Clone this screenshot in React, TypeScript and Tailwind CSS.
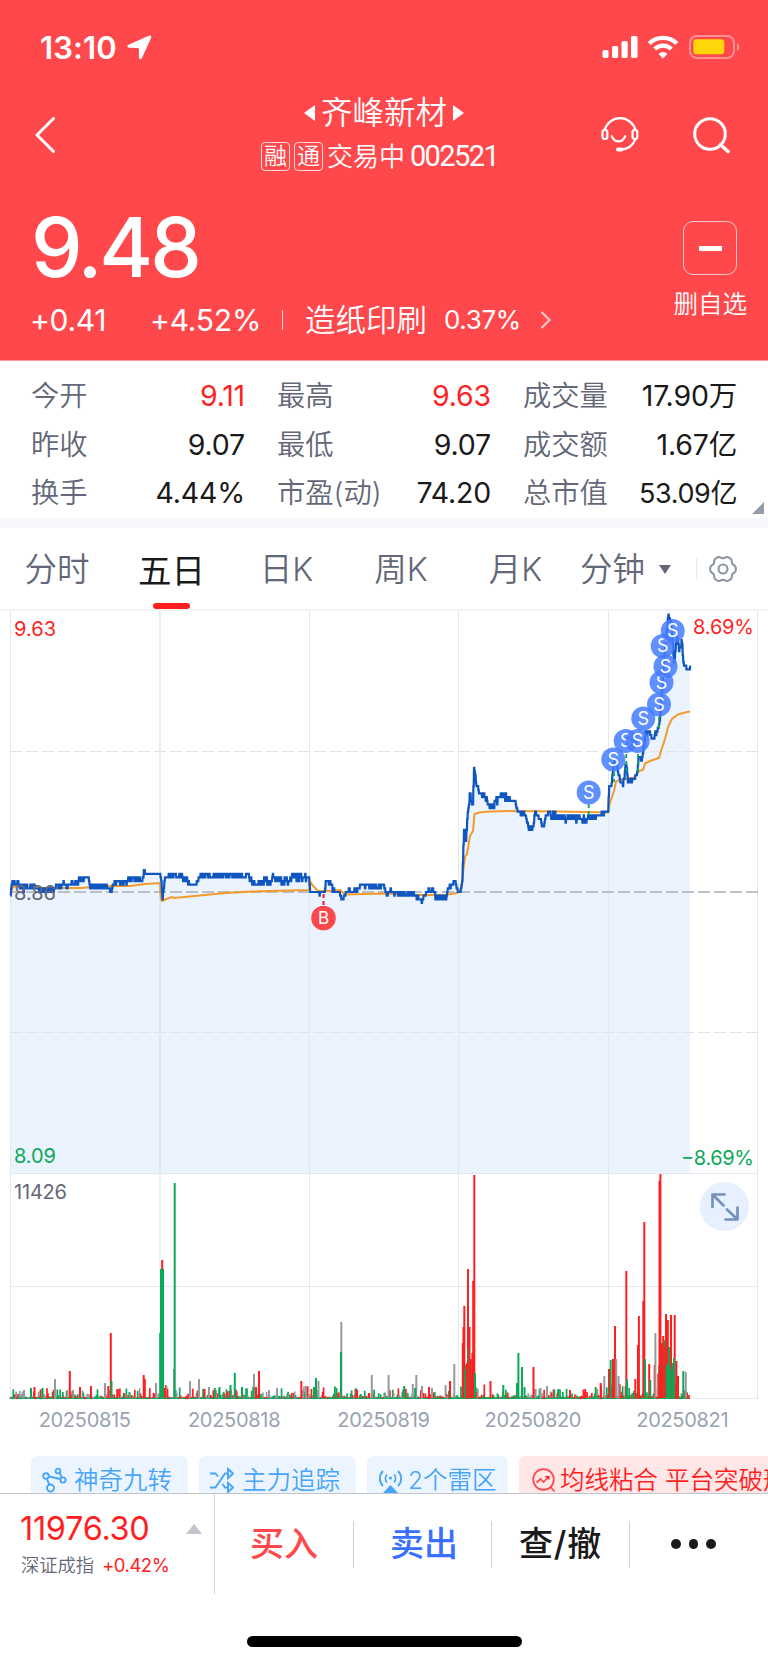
import type { ReactNode } from "react";
import clsx from "clsx";

const STATS = [
  { label: "今开", value: "9.11", up: true },
  { label: "最高", value: "9.63", up: true },
  { label: "成交量", value: "17.90万" },
  { label: "昨收", value: "9.07" },
  { label: "最低", value: "9.07" },
  { label: "成交额", value: "1.67亿" },
  { label: "换手", value: "4.44%" },
  { label: "市盈(动)", value: "74.20" },
  { label: "总市值", value: "53.09亿", small: true },
];

const DATES = ["20250815", "20250818", "20250819", "20250820", "20250821"];

// chart geometry, svg units are css pixels
const COLS = [10.5, 160, 309.5, 458.5, 608.5, 757.5];
const TICK = 3.65;
const MINUTE = 0.623;
const BASE = 281;
const BOTTOM = 562.5;
const VOL_BOTTOM = 788;

// [x, y, jitter]
const PRICE: [number, number, number][] = [
  [10.5, 284, 0], [12, 272, 3], [18, 273, 4], [20, 276, 4], [35, 277, 4], [40, 280, 4], [43, 279, 4],
  [53, 280, 3], [56, 274, 3], [70, 274, 4], [78, 272, 3], [80, 267, 3], [88, 267, 4], [90, 276, 4],
  [109, 276, 4], [111, 282, 1], [113, 272, 4], [126, 272, 4], [130, 268, 4], [138, 268, 4],
  [142, 272, 2], [144, 259, 1], [146, 262, 0], [159, 262, 0], [161, 266, 2], [162.5, 288, 2],
  [165, 265, 3], [180, 266, 5], [187, 269, 3], [190, 273, 0], [196, 272, 2], [200, 265, 3],
  [215, 264, 4], [248, 264, 4], [252, 270, 5], [256, 274, 3], [262, 270, 4], [270, 271, 4],
  [273, 267, 3], [280, 269, 4], [290, 270, 4], [292, 266, 4], [309, 266, 1], [310, 281, 3],
  [324, 282, 3], [326, 270, 3], [331, 271, 3], [333, 280, 2], [340, 281, 3], [342, 289, 2],
  [346, 282, 3], [350, 279, 2], [357, 280, 3], [362, 274, 3], [366, 276, 4], [384, 275, 4],
  [386, 283, 3], [391, 279, 3], [395, 282, 4], [405, 283, 4], [415, 284, 4], [422, 290, 2],
  [428, 279, 3], [433, 279, 3], [436, 286, 2], [446, 286, 3], [448, 276, 3], [455, 271, 4],
  [459, 283, 2], [462, 273, 0], [464, 219, 3], [466, 229, 3], [467.5, 200, 5], [470, 183, 4],
  [472.5, 198, 3], [474, 157, 2], [476, 172, 4], [479, 182, 4], [483, 184, 4], [486, 189, 4],
  [490, 196, 3], [494, 194, 4], [498, 188, 3], [502, 185, 5], [506, 187, 3], [510, 189, 3],
  [515, 190, 2], [518, 201, 4], [523, 202, 4], [526, 208, 3], [529, 216, 3], [533, 217, 2],
  [535, 202, 3], [539, 206, 3], [543, 216, 3], [546, 207, 3], [548, 201, 3], [552, 205, 5],
  [560, 206, 4], [570, 208, 4], [580, 208, 4], [586, 208, 4], [590, 205, 3], [600, 206, 4],
  [604, 201, 2], [608, 201, 2], [609, 176, 3], [611.5, 174, 3], [614, 148, 3], [617, 156, 3],
  [620, 168, 4], [623, 173, 3], [626, 152, 3], [628, 170, 4], [631, 170, 4], [637, 165, 4],
  [638.5, 146, 3], [642, 148, 4], [645, 124, 4], [648, 120, 4], [651, 123, 4], [654, 128, 4],
  [658, 117, 3], [660, 108, 4], [662, 80, 4], [664, 50, 4], [666, 28, 4], [668.5, 4, 1],
  [671, 12, 4], [674, 50, 4], [677, 22, 4], [679, 38, 4], [682, 32, 4], [684, 54, 3],
  [687, 60, 3], [690.2, 55, 2],
];

const AVERAGE: [number, number][] = [
  [10.5, 283], [13, 276], [22, 275], [34, 274], [42, 277], [80, 277], [110, 275], [130, 275],
  [145, 273], [160, 272], [160.8, 288], [162, 290], [165, 288.5], [172, 286], [174, 287], [200, 284.5],
  [225, 282], [252, 280.5], [270, 280], [309, 279], [310, 270], [313, 275], [318, 280], [330, 280],
  [340, 279], [345, 283.5], [384, 282.5], [420, 284], [445, 284], [457, 282], [461, 278], [465, 246],
  [467, 243], [470, 225], [473, 220], [474.5, 203], [479, 201.5], [490, 200.5], [510, 200], [560, 200.5],
  [608, 201.5], [609.5, 193], [614, 180], [616, 170.5], [620, 169], [634, 166.5], [639, 160], [643, 159],
  [645, 152.5], [650, 150], [659, 147], [661, 140], [665, 128], [668, 116], [672, 108], [678, 103.5],
  [683, 102], [690, 100.5],
];

const SELLS = [
  [588.7, 181.5], [613.3, 148.5], [625.7, 130], [637.6, 130], [643.3, 107.5],
  [659, 93.5], [661.5, 71.5], [665.5, 55.5], [662.7, 35], [672.7, 20],
];

const RED = "#ff1f1f";
const GREEN = "#0aa858";
const GRAY = "#97999f";

// [x, height, colour]
const SPIKES: [number, number, string][] = [
  [55, 20, GRAY], [69.8, 28, RED], [80, 12, RED], [91, 13, RED], [31, 11, GREEN], [42.5, 11, GREEN], [34.5, 12, RED],
  [24, 9, GRAY], [105, 16, GRAY], [108.3, 13, RED], [110.8, 66, RED], [111.5, 18, GREEN], [143.7, 24, RED], [144.8, 20, RED],
  [156, 16, GRAY], [162.2, 139, RED], [161, 130, GREEN], [163, 130, GREEN], [160.2, 66, GREEN], [165, 11, RED],
  [174, 30, GRAY], [174.7, 216, GREEN], [190, 18, GRAY], [199, 20, GRAY], [204.5, 10, RED], [209, 12, GRAY],
  [214.8, 11, GREEN], [219.5, 12, GREEN], [230.5, 14, GREEN], [234.8, 26, GREEN], [242, 12, GREEN],
  [254, 25, GRAY], [253.3, 12, GREEN], [256, 12, RED], [259, 28, RED], [269, 9, GRAY], [277, 11, GRAY], [301.3, 18, RED],
  [306, 13, GRAY], [316, 21, GREEN], [318.5, 18, GRAY], [314, 12, GREEN], [336.4, 11, GREEN], [341.3, 77, GRAY], [341, 47, GREEN],
  [357, 9, RED], [369, 6, RED], [371.8, 24, GRAY], [388.6, 24, GRAY], [404.2, 13, GREEN], [412.8, 15, GRAY],
  [416.3, 24, GRAY], [415.2, 11, GREEN], [422, 13, GRAY], [429, 12, RED], [432, 11, GRAY], [445.6, 14, GRAY], [450, 18, RED],
  [454.3, 35, GRAY], [462.8, 56, RED], [464.3, 93, RED], [463.5, 72, RED], [466, 34, GREEN], [468, 130, RED],
  [468.6, 51, GREEN], [469.5, 72, RED], [470.8, 40, RED], [473.2, 118, RED], [474.3, 224, RED], [475, 26, GREEN],
  [472.4, 46, RED], [490.5, 18, RED], [503.3, 14, GREEN], [518.4, 46, GREEN], [517, 16, GREEN], [522, 32, GREEN],
  [524.5, 12, GREEN], [533.5, 32, RED], [540.5, 11, GRAY], [547, 13, GRAY], [558.4, 10, GREEN], [570, 9, RED], [585.3, 10, RED],
  [595.7, 12, GREEN], [600.7, 16, RED], [604.3, 23, GRAY], [609, 30, RED], [610.7, 39, GREEN], [613, 40, RED],
  [615, 73, RED], [616.2, 40, GRAY], [618.5, 23, GRAY], [626.3, 128, RED], [627, 20, GREEN], [635.3, 20, RED],
  [638, 54, RED], [638.9, 83, RED], [643.3, 98, RED], [644.3, 177, RED], [645, 40, GREEN], [649.2, 35, RED],
  [650.3, 19, GREEN], [654.7, 34, RED], [655.4, 66, GRAY], [659.5, 218, RED], [660.4, 225, RED], [661.7, 56, RED],
  [663.2, 63, RED], [664.6, 59, GREEN], [666, 85, RED], [667.8, 79, RED], [669, 52, GREEN], [671, 84, RED],
  [674.7, 84, RED], [674, 41, GREEN], [676.4, 38, RED], [678, 23, RED], [683.3, 28, GREEN], [685.8, 27, GRAY],
  [465.2, 30, GREEN], [467, 36, RED], [662.3, 50, RED], [665.3, 52, RED], [667, 34, GREEN], [670.2, 30, GREEN], [672.5, 36, GREEN],
];

function seeded(seed: number) {
  let s = seed;
  return () => {
    s = (s * 16807) % 2147483647;
    return s / 2147483647;
  };
}

function buildPrice() {
  const rand = seeded(4211);
  let d = "";
  let i = 0;
  let prev = NaN;
  for (let x = PRICE[0][0]; x <= 690.2; x += MINUTE) {
    while (i < PRICE.length - 2 && PRICE[i + 1][0] <= x) i++;
    const [x0, y0, j0] = PRICE[i];
    const [x1, y1] = PRICE[i + 1];
    const t = Math.min(1, (x - x0) / (x1 - x0));
    const raw = y0 + (y1 - y0) * t + (rand() - 0.5) * j0 * 1.5;
    const y = BASE + Math.round((raw - BASE) / TICK) * TICK;
    if (prev === y || Number.isNaN(prev)) d += `L${x.toFixed(1)} ${y.toFixed(1)}`;
    else d += `L${(x - 0.3).toFixed(1)} ${prev.toFixed(1)}L${x.toFixed(1)} ${y.toFixed(1)}`;
    prev = y;
  }
  return d.slice(1);
}

// quiet minutes get a low random bar, busier around the two rallies
function ambient(x: number) {
  if (x > 456 && x < 474) return 8 + (x - 456) * 1.2;
  if (x >= 474 && x < 492) return 22 - (x - 474) * 0.9;
  if (x > 596 && x < 609) return 12;
  if (x >= 609 && x < 624) return 26 - (x - 609) * 1.1;
  if (x >= 624 && x < 658) return 14;
  if (x >= 658 && x < 680) return 42 - (x - 658) * 1.4;
  if (x >= 680) return 10;
  if (x > 160 && x < 180) return 13;
  if (x > 300 && x < 345) return 12;
  return 9;
}

function buildVolume() {
  const rand = seeded(977);
  const bars: [number, number, string][] = [];
  for (let x = 10.5; x <= 689.5; x += MINUTE * 1.5) {
    const top = ambient(x);
    const r = rand();
    const h = 1.8 + top * (top > 20 ? 0.35 + r * 0.5 : r * r * r);
    const c = rand();
    const busy = (x > 456 && x < 500) || x > 606;
    bars.push([x, h, c < (busy ? 0.55 : 0.42) ? GREEN : c < (busy ? 0.97 : 0.75) ? RED : GRAY]);
  }
  return bars;
}

// six soft lobes, pointing left and right
function buildGear() {
  const points: string[] = [];
  for (let a = 0; a < 360; a += 6) {
    const t = (a * Math.PI) / 180;
    const r = 12 + 1.1 * Math.cos(6 * t) - 0.25 * Math.cos(12 * t);
    points.push(`${(14 + r * Math.cos(t)).toFixed(2)} ${(14 + r * Math.sin(t)).toFixed(2)}`);
  }
  return `M${points.join("L")}Z`;
}

const pricePath = buildPrice();
const volume = buildVolume();
const gearPath = buildGear();
const averagePath = AVERAGE.map(([x, y]) => `${x} ${y}`).join("L");

function StatusBar() {
  return (
    <div className="flex h-[94px] items-center justify-between pl-[40px] pr-[27px]">
      <div className="flex items-center gap-[10px]">
        <span className="text-[31px] font-semibold leading-none tracking-[0.1px]">13:10</span>
        <svg className="h-[25px] w-[25px]" viewBox="0 0 25 25" fill="#fff">
          <path d="M22.3.6 1.5 9.7C-.3 10.6.2 12.6 2 12.7l9 .2c.6 0 .8.2.8.8l.2 8.8c.1 1.9 2.2 2.3 3 .5L24.2 2.6C24.7 1.2 23.6.1 22.3.6Z" />
        </svg>
      </div>
      <div className="flex items-center">
        <svg className="h-[22px] w-[36px]" viewBox="0 0 36 22" fill="#fff">
          <rect x="0.5" y="14" width="6" height="8" rx="1.7" />
          <rect x="10" y="10" width="6.2" height="12" rx="1.7" />
          <rect x="19.5" y="5" width="6.2" height="17" rx="1.7" />
          <rect x="29" y="0" width="6.5" height="22" rx="1.7" />
        </svg>
        <svg className="ml-[9px] h-[24px] w-[32px]" viewBox="0 0 32 24" fill="none" stroke="#fff" strokeWidth="4.2">
          <path d="M2.2 8.6a19.5 19.5 0 0 1 27.6 0" />
          <path d="M7.7 14.1a11.7 11.7 0 0 1 16.6 0" />
          <path d="M16 23.4l-4.4-4.5a6.2 6.2 0 0 1 8.8 0z" fill="#fff" stroke="none" />
        </svg>
        <svg className="ml-[10px] h-[24px] w-[52px]" viewBox="0 0 52 24">
          <rect x="1" y="1" width="44" height="22" rx="7" fill="none" stroke="#fff" strokeOpacity="0.4" strokeWidth="2" />
          <rect x="4.3" y="4.3" width="31" height="15" rx="3" fill="#ffd60a" />
          <path d="M48 8v8c3-1.2 3-6.8 0-8Z" fill="#fff" fillOpacity="0.45" />
        </svg>
      </div>
    </div>
  );
}

function BoxedChar({ children }: { children: ReactNode }) {
  return (
    <span className="flex h-[29px] w-[29px] items-center justify-center rounded-[4px] border border-white/80 text-[23px] leading-none">
      {children}
    </span>
  );
}

function Header() {
  return (
    <header className="h-[360px] bg-[#ff484b] text-white">
      <StatusBar />
      <div className="flex h-[82px] items-center justify-between pl-[35px] pr-[38px]">
        <svg className="h-[36px] w-[210px]" viewBox="0 0 210 36" fill="none" stroke="#fff" strokeWidth="3" strokeLinecap="round" strokeLinejoin="round">
          <path d="M18.5 1.5 2 18l16.5 16.5" />
        </svg>
        <div className="flex flex-col items-center">
          <div className="-mt-[2px] flex items-center gap-[6px] pl-[3px]">
            <svg className="h-[16px] w-[11px]" viewBox="0 0 11 16" fill="#fff"><path d="M11 0v16L0 8z" /></svg>
            <span className="text-[31.5px] leading-[42px]">齐峰新材</span>
            <svg className="h-[16px] w-[11px]" viewBox="0 0 11 16" fill="#fff"><path d="M0 0v16l11-8z" /></svg>
          </div>
          <div className="mt-[3px] flex h-[40px] items-center gap-[4px] pr-[6px] text-[26px] leading-none">
            <BoxedChar>融</BoxedChar>
            <BoxedChar>通</BoxedChar>
            <span className="flex items-center gap-[5px]">
              <span>交易中</span>
              <span className="font-['Roboto'] text-[29px] font-normal tracking-[-1.6px]">002521</span>
            </span>
          </div>
        </div>
        <div className="flex w-[210px] items-center justify-end gap-[54px]">
          <svg className="h-[36px] w-[38px]" viewBox="0 0 38 36" fill="none" stroke="#fff" strokeWidth="2.2" strokeLinecap="round">
            <path d="M3.8 12.5a15.9 15.9 0 0 1 30.5 0" />
            <rect x="1.5" y="13" width="4.8" height="9" rx="2.2" />
            <rect x="31.5" y="13" width="4.8" height="9" rx="2.2" />
            <path d="M34.2 22.5C32 28.5 27 32 20 32.5" />
            <path d="M17 32.5h3.5" strokeWidth="4" />
            <path d="M10.8 19.2c3 7 10.2 7 13.4 0" />
          </svg>
          <svg className="h-[37px] w-[37px]" viewBox="0 0 37 37" fill="none" stroke="#fff" strokeWidth="3">
            <circle cx="17" cy="17" r="15.3" />
            <path d="m27.5 27.5 7.5 7" strokeWidth="3.4" strokeLinecap="round" />
          </svg>
        </div>
      </div>
      <div className="flex justify-between pl-[31px] pr-[21px]">
        <div>
          <div className="h-[112px] pt-[32px] text-[82px] font-medium leading-[80px] tracking-[-3px]">9.48</div>
          <div className="flex h-[64px] items-center text-[30px] leading-none">
            <span className="-ml-[1px] w-[120px] font-normal tracking-[-0.3px]">+0.41</span>
            <span className="w-[132px] font-normal tracking-[-0.2px]">+4.52%</span>
            <span className="h-[20px] w-px bg-white/80" />
            <span className="ml-[22px] text-[30.5px]">造纸印刷</span>
            <span className="ml-[17px] text-[26px] font-normal tracking-[-0.4px]">0.37%</span>
            <svg className="ml-[19px] h-[18px] w-[12px]" viewBox="0 0 12 18" fill="none" stroke="#fff" strokeOpacity="0.7" strokeWidth="2.2">
              <path d="m1.5 1 8 8-8 8" />
            </svg>
          </div>
        </div>
        <div className="flex flex-col items-center pt-[45px]">
          <div className="flex h-[54px] w-[54px] items-center justify-center rounded-[10px] border-[1.5px] border-white/70">
            <span className="h-[5px] w-[23px] bg-white" />
          </div>
          <span className="mt-[12px] text-[24.5px] leading-[34px]">删自选</span>
        </div>
      </div>
    </header>
  );
}

function Stats() {
  return (
    <section className="relative h-[158px] border-t border-[#ff9a9b] bg-white px-[31px] pt-[11px]">
      <div className="grid grid-cols-3 gap-x-[32px]">
        {STATS.map((item) => (
          <div key={item.label} className="flex h-[48.5px] items-center justify-between leading-none">
            <span className="text-[28.3px] text-[#636777]">{item.label}</span>
            <span
              className={clsx(
                "font-normal tracking-[-0.2px]",
                item.small ? "text-[27px] tracking-[-0.4px]" : "text-[28.5px]",
                item.up ? "text-[#ff1f1f]" : "text-[#1a1a1a]"
              )}
            >
              {item.value}
            </span>
          </div>
        ))}
      </div>
      <svg className="absolute bottom-[4px] right-[4px] h-[12px] w-[12px]" viewBox="0 0 12 12" fill="#969daa">
        <path d="M12 0v12H0z" />
      </svg>
    </section>
  );
}

function Tabs() {
  return (
    <nav className="flex h-[83px] border-b-2 border-[#f1f3f7] text-[32.5px] leading-none text-[#636777]">
      <div className="flex w-[114px] items-center justify-center pt-[4px]">分时</div>
      <div className="flex w-[115px] flex-col items-center justify-between pt-[27px] text-[#1a1a1a]">
        <span className="text-[33.5px] font-normal">五日</span>
        <span className="h-[6px] w-[37px] shrink-0 rounded-full bg-[#ff1f1f]" />
      </div>
      <div className="flex w-[115px] items-center justify-center pt-[4px]">日K</div>
      <div className="flex w-[114px] items-center justify-center pt-[4px]">周K</div>
      <div className="flex w-[115px] items-center justify-center pt-[4px]">月K</div>
      <div className="flex w-[123px] items-center pl-[7px] pt-[4px]">
        分钟
        <svg className="-mt-[2px] ml-[14px] h-[9px] w-[12px]" viewBox="0 0 12 9" fill="#636777"><path d="M0 0h12L6 9z" /></svg>
      </div>
      <div className="flex items-center gap-[12px]">
        <span className="h-[21px] w-px bg-[#e6e9f0]" />
        <svg className="h-[28px] w-[28px]" viewBox="0 0 28 28" fill="none" stroke="#8d96a3" strokeWidth="2.1" strokeLinejoin="round">
          <path d={gearPath} />
          <circle cx="14" cy="14" r="4.5" />
        </svg>
      </div>
    </nav>
  );
}

function Chart() {
  return (
    <section className="relative">
      <svg className="block h-[790px] w-[768px] font-['Inter',sans-serif] font-normal" viewBox="0 0 768 790" fontSize="20">
        <path d={`M${pricePath}V${BOTTOM}H10.5Z`} fill="#ebf3fe" />
        <g stroke="#1f5fc8" strokeOpacity="0.15">
          {COLS.slice(1, 5).map((x) => <path key={x} d={`M${x} 0V${BOTTOM}`} />)}
        </g>
        <g stroke="#e3e7ee">
          {COLS.map((x) => <path key={x} d={`M${x} 0V${VOL_BOTTOM}`} />)}
          <path d="M10 562.5H758M10 675.5H758M10 787.5H758" />
        </g>
        <path d="M10 140.5H758M10 421.5H758" stroke="#e0e4ea" strokeDasharray="12 4" />
        <path d="M10 281H758" stroke="#a9aeb8" strokeWidth="1.7" strokeDasharray="12 4" />

        <path d={`M${averagePath}`} fill="none" stroke="#f39a2b" strokeWidth="2" />
        <path d={`M${pricePath}`} fill="none" stroke="#0f56c1" strokeWidth="2.2" />

        <text x="14" y="25" fill="#ff1f1f" textLength="42">9.63</text>
        <text x="14" y="289" fill="#636777" textLength="42">8.86</text>
        <text x="14" y="552" fill={GREEN} textLength="42">8.09</text>
        <text x="693" y="23" fill="#ff1f1f" textLength="61">8.69%</text>
        <text x="681" y="554" fill={GREEN} textLength="73">−8.69%</text>
        <text x="14" y="588" fill="#636777" textLength="53">11426</text>

        <g fill="none" stroke={GREEN} strokeWidth="1.8" strokeDasharray="4 3">
          <path d="M588.7 193V204M614 161V171M626.3 143V164M638 143V163M659 106V117" />
        </g>
        <path d="M323.5 283V296" stroke="#f01a2c" strokeWidth="2" strokeDasharray="4 3" />
        {SELLS.map(([x, y]) => (
          <g key={`${x}-${y}`}>
            <circle cx={x} cy={y} r="12" fill="#447bff" fillOpacity="0.85" />
            <text x={x} y={y + 6} fill="#fff" fontSize="18" textAnchor="middle">S</text>
          </g>
        ))}
        <circle cx="323.5" cy="307" r="12.3" fill="#fa484b" />
        <text x="323.5" y="313" fill="#fff" fontSize="17" textAnchor="middle">B</text>

        {volume.map(([x, h, c]) => (
          <rect key={x} x={x - 0.8} y={VOL_BOTTOM - h} width="1.7" height={h} fill={c} />
        ))}
        {SPIKES.map(([x, h, c], i) => (
          <rect key={i} x={x - 1} y={VOL_BOTTOM - h} width="2" height={h} fill={c} />
        ))}
        <path d="M10 787.5H306M309 787.5H690" stroke={GREEN} strokeWidth="1.2" strokeDasharray="5 3 9 2" />
      </svg>
      <button className="absolute left-[700px] top-[571px] flex h-[49px] w-[49px] items-center justify-center rounded-full bg-[#e6f0fe]">
        <svg className="h-[28px] w-[28px]" viewBox="0 0 28 28" fill="none" stroke="#7591bd" strokeWidth="2.7" strokeLinecap="round" strokeLinejoin="round">
          <path d="M13.5 1.5H1.5V14M2 2l10.5 10.5M14.5 26.5h12V14.5M26 26 16 16.5" />
        </svg>
      </button>
      <div className="ml-[10px] grid w-[747px] grid-cols-5 pb-px pt-[7px] text-center text-[20px] font-normal leading-[24px] tracking-[-0.3px] text-[#9aa2b1]">
        {DATES.map((date) => (
          <span key={date}>{date}</span>
        ))}
      </div>
    </section>
  );
}

function Tag({ icon, hot, className, children }: { icon: ReactNode; hot?: boolean; className?: string; children: ReactNode }) {
  return (
    <div
      className={clsx(
        "flex h-[48px] shrink-0 items-center whitespace-nowrap rounded-[7px] text-[24.5px] leading-none",
        hot ? "bg-[#ffe7e7] text-[#ff1f1f]" : "bg-[#ecf5ff] text-[#48a5f9]",
        className
      )}
    >
      {icon}
      {children}
    </div>
  );
}

function Tags() {
  return (
    <div className="flex h-[37px] gap-[11px] overflow-hidden pl-[31px]">
      <Tag
        className="w-[157px] gap-[7px] pl-[11px]"
        icon={
          <svg className="h-[26px] w-[25px] shrink-0" viewBox="0 0 25 26" fill="none" stroke="currentColor" strokeWidth="1.9">
            <circle cx="4" cy="9" r="2.8" />
            <circle cx="16" cy="4" r="2.4" />
            <circle cx="21" cy="13" r="2.6" />
            <circle cx="8.5" cy="21" r="3.5" />
            <path d="M7 9.5 18.5 12M5 12l2.2 5.5M17.5 6l2.5 4.5" />
          </svg>
        }
      >
        神奇九转
      </Tag>
      <Tag
        className="w-[157px] gap-[8px] pl-[11px]"
        icon={
          <svg className="h-[26px] w-[24px] shrink-0" viewBox="0 0 24 26" fill="none" stroke="currentColor" strokeWidth="1.9">
            <path d="M0 6.5h5.5l2.5 3M0 20.5h5.5L15 6.5h3M12.5 17l2.5 3.5h3" />
            <path d="M18 2v9l5-4.5zM18 16v9l5-4.5z" />
          </svg>
        }
      >
        主力追踪
      </Tag>
      <Tag
        className="w-[141px] gap-[5px] pl-[11px]"
        icon={
          <svg className="h-[26px] w-[25px] shrink-0" viewBox="0 0 25 26" fill="none" stroke="currentColor" strokeWidth="1.8">
            <path d="M5 4a10.5 10.5 0 0 0 0 15M20 4a10.5 10.5 0 0 1 0 15M9 7.5a6 6 0 0 0 0 8M16 7.5a6 6 0 0 1 0 8" />
            <circle cx="12.5" cy="11" r="1.6" fill="currentColor" stroke="none" />
            <path d="M12.5 18 20 26H5z" fill="currentColor" stroke="none" />
          </svg>
        }
      >
        <span>2个雷区</span>
      </Tag>
      <Tag
        hot
        className="w-[300px] gap-[4px] pl-[13px]"
        icon={
          <svg className="h-[24px] w-[24px] shrink-0" viewBox="0 0 24 24" fill="none" stroke="currentColor" strokeOpacity="0.8" strokeWidth="1.7">
            <circle cx="11.5" cy="11.5" r="10.3" />
            <path d="m18.5 19 4 4.5M4.500 14.500l4-3.500 3 3 5-5" />
            <path d="M12.500 8h5v4z" fill="currentColor" stroke="none" />
          </svg>
        }
      >
        均线粘合 平台突破形
      </Tag>
    </div>
  );
}

function BottomBar() {
  return (
    <footer className="h-[171px] border-t border-[#c1c4cd] bg-white">
      <div className="flex h-[100px]">
        <div className="flex w-[215px] justify-between border-r border-[#d3d5dc] pl-[20px] pr-[12px] pt-[18px]">
          <div className="shrink-0">
            <div className="whitespace-nowrap text-[32.5px] font-normal leading-[34px] tracking-[-0.3px] text-[#ff1f1f]">11976.30</div>
            <div className="mt-[7px] flex items-center gap-[8px] pl-px text-[18.3px] leading-[24px] text-[#636777]">
              深证成指
              <span className="text-[18.5px] font-normal tracking-[-0.5px] text-[#ff1f1f]">+0.42%</span>
            </div>
          </div>
          <svg className="-ml-[12px] mt-[12px] h-[10px] w-[16px] shrink-0" viewBox="0 0 16 10" fill="#c1c4cd"><path d="M8 0l8 10H0z" /></svg>
        </div>
        <div className="flex h-[100px] flex-1 items-center text-[34px] font-medium leading-none">
          <button className="h-[47px] w-[139px] border-r-[1.5px] border-[#cfd1d8] text-[#ff484b]">买入</button>
          <button className="h-[47px] w-[138px] border-r-[1.5px] border-[#cfd1d8] pl-[3px] text-[#3a70ff]">卖出</button>
          <button className="h-[47px] w-[138px] border-r-[1.5px] border-[#cfd1d8] tracking-[0.8px] text-[#1a1a1a]">查/撤</button>
          <div className="flex flex-1 justify-center gap-[8px] pr-[11px]">
            <span className="h-[9.5px] w-[9.5px] rounded-full bg-[#1a1a1a]" />
            <span className="h-[9.5px] w-[9.5px] rounded-full bg-[#1a1a1a]" />
            <span className="h-[9.5px] w-[9.5px] rounded-full bg-[#1a1a1a]" />
          </div>
        </div>
      </div>
      <div className="mx-auto mt-[42px] h-[11px] w-[275px] rounded-full bg-black" />
    </footer>
  );
}

export default function App() {
  return (
    <div className="h-[1663px] w-[768px] overflow-hidden bg-white font-['Inter','Noto_Sans_CJK_SC',sans-serif] font-[350]">
      <Header />
      <Stats />
      <div className="h-[10px] bg-[#f6f8fb]" />
      <Tabs />
      <Chart />
      <div className="h-[23px]" />
      <Tags />
      <BottomBar />
    </div>
  );
}
